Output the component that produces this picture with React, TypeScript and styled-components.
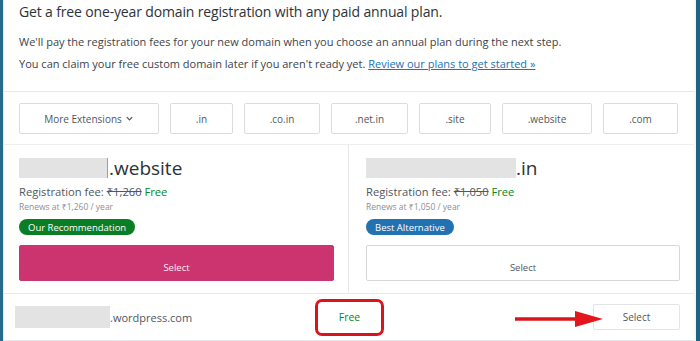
import styled, { createGlobalStyle } from 'styled-components';

const GlobalStyle = createGlobalStyle`
  html, body {
    margin: 0;
    padding: 0;
    background: #ffffff;
  }
  body {
    font-family: "Open Sans", "Noto Sans", Arial, sans-serif;
    color: #50575e;
  }
`;

const Frame = styled.div`
  width: 700px;
  height: 341px;
  box-sizing: border-box;
  display: flex;
  border-left: 3px solid #256b8c;
  border-right: 4px solid #1f6283;
  background: #ffffff;
  overflow: hidden;
`;

const Panel = styled.div`
  flex: 1;
  display: flex;
  flex-direction: column;
  border-left: 1px solid #e4e6e8;
  border-right: 2px solid #f4f6f8;
`;

const Header = styled.div`
  padding: 1px 15px 0;
  height: 92px;
  box-sizing: border-box;
  border-bottom: 1px solid #e6e8ea;
`;

const Title = styled.h1`
  margin: 0;
  font-size: 14px;
  font-weight: 400;
  line-height: 22px;
  letter-spacing: -0.15px;
  color: #2c3338;
`;

const Lead = styled.p`
  margin: 0;
  font-size: 11px;
  line-height: 22px;
  color: #3c434a;
  &:first-of-type {
    margin-top: 8px;
  }
`;

const Link = styled.a`
  color: #2271b1;
  text-decoration: underline;
`;

const ExtRow = styled.div`
  display: flex;
  gap: 11px;
  padding: 11px 15px 10px;
  border-bottom: 1px solid #eceef0;
`;

const ExtButton = styled.button<{ $w: number }>`
  width: ${({ $w }) => $w}px;
  height: 31px;
  flex: none;
  display: flex;
  align-items: center;
  justify-content: center;
  gap: 3px;
  background: #ffffff;
  border: 1px solid #dcdcde;
  border-radius: 2px;
  font-family: inherit;
  font-size: 10px;
  color: #50575e;
  padding: 0;
`;

const Cards = styled.div`
  display: flex;
  height: 148px;
  border-bottom: 1px solid #e6e8ea;
`;

const Card = styled.div<{ $pad: number; $divider?: boolean }>`
  flex: ${({ $divider }) => ($divider ? '0 0 345px' : '1')};
  box-sizing: border-box;
  padding: 11px 14px 0 ${({ $pad }) => $pad}px;
  border-right: ${({ $divider }) => ($divider ? '1px solid #e6e8ea' : 'none')};
  display: flex;
  flex-direction: column;
`;

const DomainName = styled.div`
  display: flex;
  align-items: center;
  height: 23px;
  font-size: 19px;
  color: #2c3338;
`;

const Redacted = styled.span<{ $w: number; $h: number }>`
  display: inline-block;
  width: ${({ $w }) => $w}px;
  height: ${({ $h }) => $h}px;
  background: #e3e3e3;
`;

const CardRedacted = styled(Redacted)`
  border-right: 1px solid #9aa0a6;
  margin-right: 1px;
`;

const Fee = styled.div`
  margin-top: 4px;
  font-size: 11.2px;
  line-height: 18px;
  color: #50575e;
`;

const Strike = styled.span`
  text-decoration: line-through;
`;

const FreeText = styled.span`
  color: #008a20;
`;

const Renews = styled.div`
  font-size: 8.5px;
  line-height: 12px;
  color: #8c8f94;
`;

const Badge = styled.span<{ $tone: 'green' | 'blue' }>`
  align-self: flex-start;
  margin-top: 6px;
  height: 16px;
  padding: 0 9px;
  border-radius: 9px;
  display: flex;
  align-items: center;
  font-size: 9.5px;
  color: #ffffff;
  background: ${({ $tone }) => ($tone === 'green' ? '#0a7d25' : '#2271b1')};
`;

const SelectBig = styled.button<{ $primary?: boolean }>`
  margin-top: 10px;
  height: 36px;
  width: 100%;
  display: flex;
  align-items: center;
  justify-content: center;
  padding: 8px 0 0;
  border-radius: 2px;
  font-family: inherit;
  font-size: 9.5px;
  border: 1px solid ${({ $primary }) => ($primary ? '#c9356e' : '#d5d7da')};
  background: ${({ $primary }) => ($primary ? '#cc3470' : '#ffffff')};
  color: ${({ $primary }) => ($primary ? '#ffe6ef' : '#50575e')};
`;

const BottomRow = styled.div`
  position: relative;
  flex: 1;
  display: flex;
  align-items: center;
  padding: 0 14px 0 11px;
  border-bottom: 1px solid #e6e8ea;
`;

const FreeDomain = styled.div`
  display: flex;
  align-items: center;
  font-size: 11px;
  color: #50575e;
  width: 300px;
`;

const FreeCell = styled.div`
  width: 63px;
  height: 31px;
  display: flex;
  align-items: center;
  justify-content: center;
  border: 3px solid #d9141b;
  border-radius: 7px;
  font-size: 10.5px;
  color: #008a20;
`;

const Arrow = styled.svg`
  position: absolute;
  left: 511px;
  top: 15px;
`;

const SelectSmall = styled.button`
  margin-left: auto;
  width: 87px;
  height: 26px;
  background: #ffffff;
  border: 1px solid #e2e4e6;
  border-radius: 2px;
  font-family: inherit;
  font-size: 10px;
  color: #50575e;
`;

const extensions = [
  { label: 'More Extensions', w: 140, chevron: true },
  { label: '.in', w: 63 },
  { label: '.co.in', w: 76 },
  { label: '.net.in', w: 77 },
  { label: '.site', w: 72 },
  { label: '.website', w: 90 },
  { label: '.com', w: 75 },
];

export default function App() {
  return (
    <>
      <GlobalStyle />
      <Frame>
        <Panel>
          <Header>
            <Title>Get a free one-year domain registration with any paid annual plan.</Title>
            <Lead>We'll pay the registration fees for your new domain when you choose an annual plan during the next step.</Lead>
            <Lead>
              You can claim your free custom domain later if you aren't ready yet.{' '}
              <Link href="#">Review our plans to get started »</Link>
            </Lead>
          </Header>

          <ExtRow>
            {extensions.map((ext) => (
              <ExtButton key={ext.label} $w={ext.w}>
                {ext.label}
                {ext.chevron && (
                  <svg width="9" height="9" viewBox="0 0 10 10">
                    <path d="M2 3.5 L5 6.5 L8 3.5" fill="none" stroke="#50575e" strokeWidth="1.4" />
                  </svg>
                )}
              </ExtButton>
            ))}
          </ExtRow>

          <Cards>
            <Card $pad={15} $divider>
              <DomainName>
                <CardRedacted $w={88} $h={20} />
                .website
              </DomainName>
              <Fee>
                Registration fee: <Strike>₹1,260</Strike> <FreeText>Free</FreeText>
              </Fee>
              <Renews>Renews at ₹1,260 / year</Renews>
              <Badge $tone="green">Our Recommendation</Badge>
              <SelectBig $primary>Select</SelectBig>
            </Card>
            <Card $pad={17}>
              <DomainName>
                <Redacted $w={150} $h={20} />
                .in
              </DomainName>
              <Fee>
                Registration fee: <Strike>₹1,050</Strike> <FreeText>Free</FreeText>
              </Fee>
              <Renews>Renews at ₹1,050 / year</Renews>
              <Badge $tone="blue">Best Alternative</Badge>
              <SelectBig>Select</SelectBig>
            </Card>
          </Cards>

          <BottomRow>
            <FreeDomain>
              <Redacted $w={95} $h={22} />
              .wordpress.com
            </FreeDomain>
            <FreeCell>Free</FreeCell>
            <Arrow width="90" height="20" viewBox="0 0 90 20">
              <path d="M0 10 H64" stroke="#d9141b" strokeWidth="3.5" />
              <path d="M60 2 L88 10 L60 18 Z" fill="#e3161d" />
            </Arrow>
            <SelectSmall>Select</SelectSmall>
          </BottomRow>
        </Panel>
      </Frame>
    </>
  );
}
